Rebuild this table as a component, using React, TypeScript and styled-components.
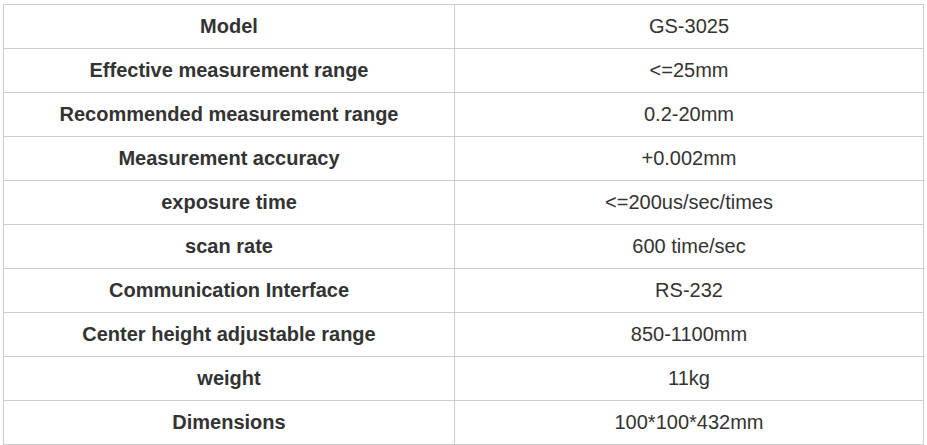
import React from "react";
import styled, { createGlobalStyle } from "styled-components";

const Global = createGlobalStyle`
  html, body { margin: 0; padding: 0; background: #fff; }
  * { box-sizing: border-box; }
`;

const Page = styled.div`
  padding: 4px 0 0 3px;
`;

const Table = styled.div`
  display: grid;
  grid-template-columns: 451px 469px;
  width: 921px;
  border-top: 1px solid #ccc;
  border-left: 1px solid #ccc;
  font-family: "Liberation Sans", Arial, sans-serif;
  font-size: 20px;
  color: #333;
`;

const Cell = styled.div<{ $bold?: boolean }>`
  height: 44px;
  border-right: 1px solid #ccc;
  border-bottom: 1px solid #ccc;
  display: flex;
  align-items: center;
  justify-content: center;
  font-weight: ${(p) => (p.$bold ? 700 : 400)};
  white-space: nowrap;
`;

const rows: [string, string][] = [
  ["Model", "GS-3025"],
  ["Effective measurement range", "<=25mm"],
  ["Recommended measurement range", "0.2-20mm"],
  ["Measurement accuracy", "+0.002mm"],
  ["exposure time", "<=200us/sec/times"],
  ["scan rate", "600 time/sec"],
  ["Communication Interface", "RS-232"],
  ["Center height adjustable range", "850-1100mm"],
  ["weight", "11kg"],
  ["Dimensions", "100*100*432mm"],
];

export default function App() {
  return (
    <>
      <Global />
      <Page>
        <Table>
          {rows.map(([k, v]) => (
            <React.Fragment key={k}>
              <Cell $bold>{k}</Cell>
              <Cell>{v}</Cell>
            </React.Fragment>
          ))}
        </Table>
      </Page>
    </>
  );
}
